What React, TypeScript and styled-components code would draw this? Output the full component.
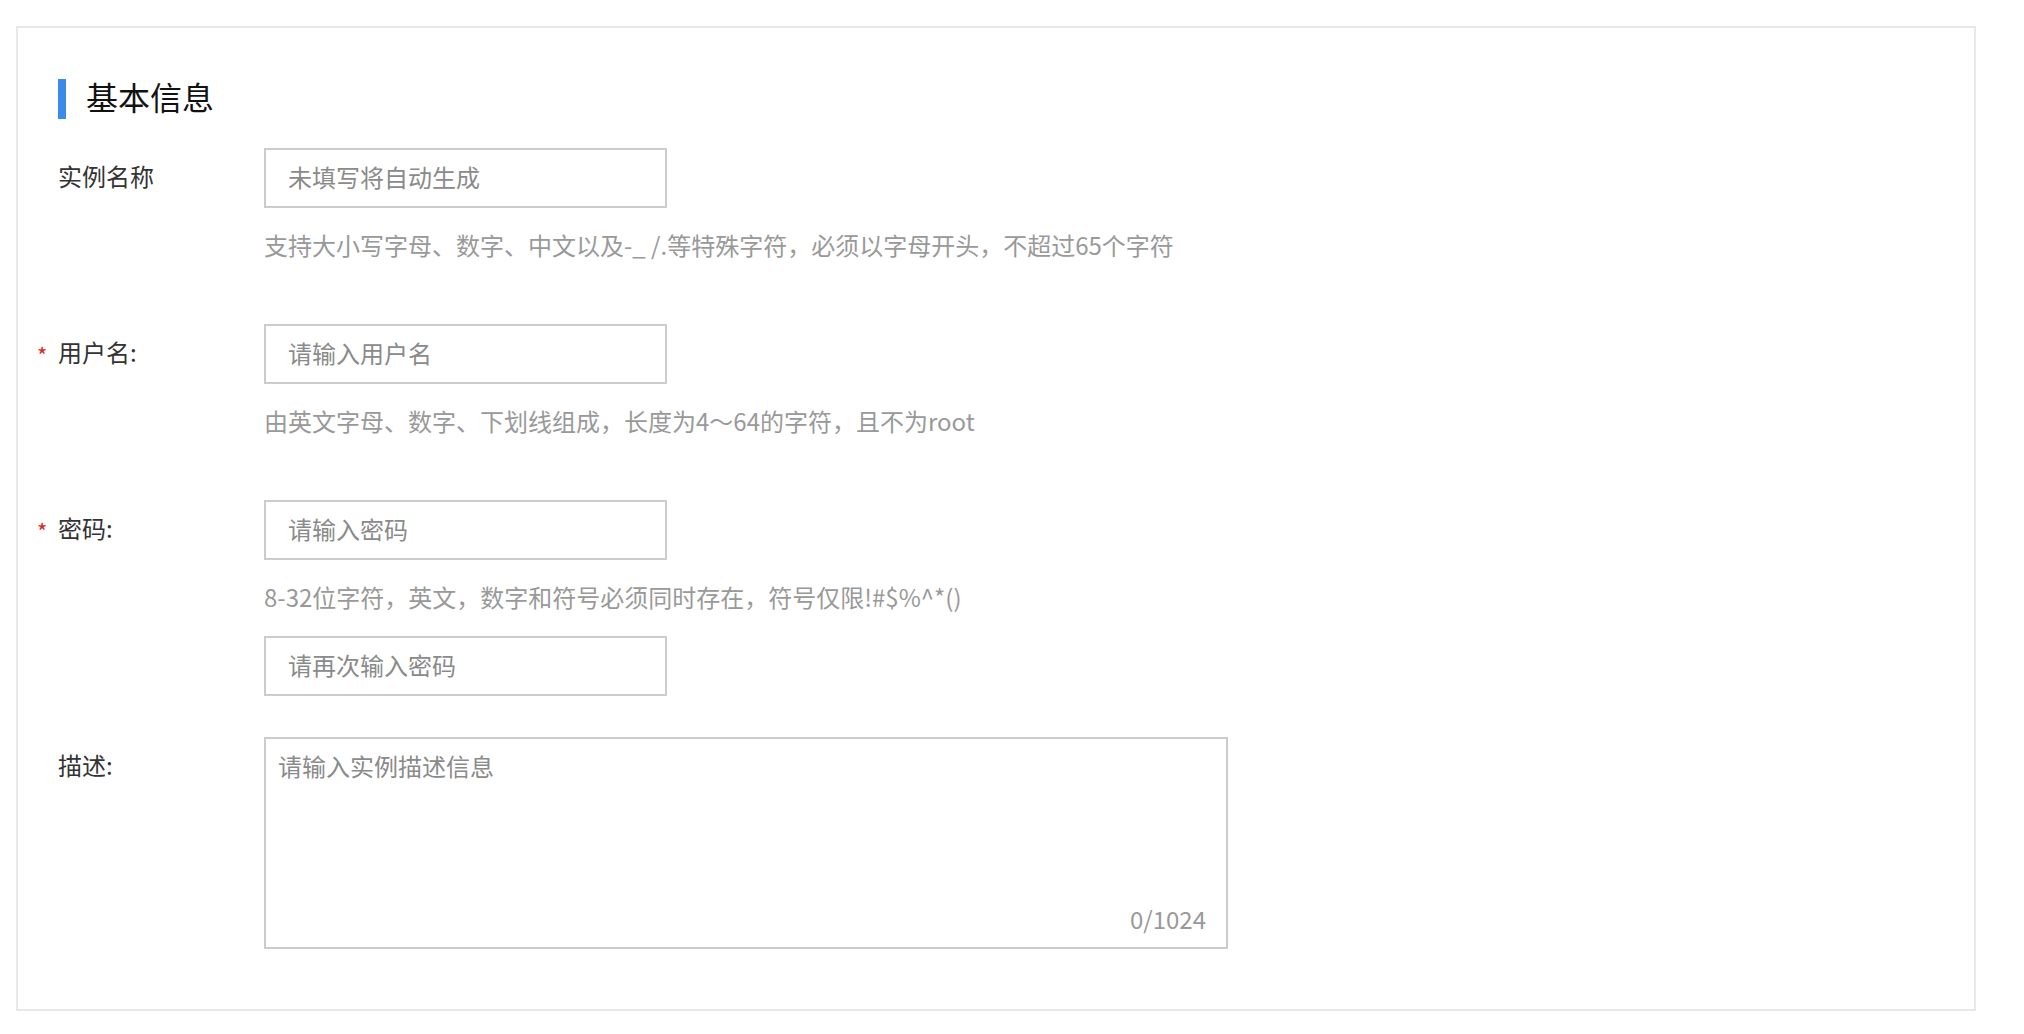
import React from "react";
import styled, { createGlobalStyle } from "styled-components";

const FONT = `"Noto Sans CJK SC", "Noto Sans", sans-serif`;

const GlobalStyle = createGlobalStyle`
  html, body {
    margin: 0;
    padding: 0;
    background: #ffffff;
    font-family: ${FONT};
  }
  * { box-sizing: border-box; }
`;

const Page = styled.div`
  padding: 26px 48px 22px 16px;
`;

const Card = styled.section`
  border: 2px solid #e8e8e8;
  background: #ffffff;
  padding: 51px 40px 60px 22px;
`;

const SectionTitle = styled.h2`
  display: flex;
  align-items: flex-start;
  gap: 20px;
  margin: 0 0 29px 18px;
  height: 40px;
  font-size: 32px;
  font-weight: 400;
  color: #111111;
`;

const TitleBar = styled.span`
  width: 8px;
  height: 40px;
  background: #3b8be8;
`;

const TitleText = styled.span`
  line-height: 35px;
`;

const FormItem = styled.div<{ $gap: number }>`
  display: grid;
  grid-template-columns: 224px 1fr;
  margin-bottom: ${(p) => p.$gap}px;
`;

const Label = styled.label`
  display: flex;
  align-items: flex-start;
  height: 60px;
  font-size: 24px;
  line-height: 55px;
  color: #333333;
`;

const Required = styled.span<{ $show: boolean }>`
  width: 18px;
  flex: none;
  font-size: 22px;
  color: #e02424;
  visibility: ${(p) => (p.$show ? "visible" : "hidden")};
  transform: translate(-3px, 3px);
`;

const Control = styled.div`
  display: flex;
  flex-direction: column;
  align-items: flex-start;
`;

const TextInput = styled.input<{ $top?: number }>`
  width: 403px;
  height: 60px;
  margin: ${(p) => p.$top ?? 0}px 0 0 0;
  padding: 0 20px 4px 22px;
  border: 2px solid #cccccc;
  border-radius: 0;
  outline: none;
  background: #ffffff;
  font-family: ${FONT};
  font-size: 24px;
  color: #333333;
  &::placeholder {
    color: #8a8a8a;
  }
`;

const Help = styled.div`
  margin-top: 19px;
  font-size: 24px;
  line-height: 36px;
  color: #999999;
  white-space: nowrap;
`;

const AreaWrap = styled.div`
  position: relative;
  width: 964px;
  height: 212px;
`;

const TextArea = styled.textarea`
  display: block;
  width: 100%;
  height: 100%;
  padding: 9px 12px;
  border: 2px solid #cccccc;
  border-radius: 0;
  outline: none;
  resize: none;
  background: #ffffff;
  font-family: ${FONT};
  font-size: 24px;
  line-height: 36px;
  color: #333333;
  &::placeholder {
    color: #8a8a8a;
  }
`;

const Counter = styled.span`
  position: absolute;
  right: 22px;
  bottom: 12px;
  font-size: 24px;
  line-height: 36px;
  color: #999999;
`;

export default function App() {
  return (
    <>
      <GlobalStyle />
      <Page>
        <Card>
          <SectionTitle>
            <TitleBar />
            <TitleText>基本信息</TitleText>
          </SectionTitle>

          <FormItem $gap={61}>
            <Label>
              <Required $show={false}>*</Required>
              实例名称
            </Label>
            <Control>
              <TextInput placeholder="未填写将自动生成" />
              <Help>支持大小写字母、数字、中文以及-_ /.等特殊字符，必须以字母开头，不超过65个字符</Help>
            </Control>
          </FormItem>

          <FormItem $gap={61}>
            <Label>
              <Required $show>*</Required>
              用户名:
            </Label>
            <Control>
              <TextInput placeholder="请输入用户名" />
              <Help>由英文字母、数字、下划线组成，长度为4～64的字符，且不为root</Help>
            </Control>
          </FormItem>

          <FormItem $gap={41}>
            <Label>
              <Required $show>*</Required>
              密码:
            </Label>
            <Control>
              <TextInput type="password" placeholder="请输入密码" />
              <Help>8-32位字符，英文，数字和符号必须同时存在，符号仅限!#$%^*()</Help>
              <TextInput type="password" $top={21} placeholder="请再次输入密码" />
            </Control>
          </FormItem>

          <FormItem $gap={0}>
            <Label>
              <Required $show={false}>*</Required>
              描述:
            </Label>
            <Control>
              <AreaWrap>
                <TextArea placeholder="请输入实例描述信息" />
                <Counter>0/1024</Counter>
              </AreaWrap>
            </Control>
          </FormItem>
        </Card>
      </Page>
    </>
  );
}
